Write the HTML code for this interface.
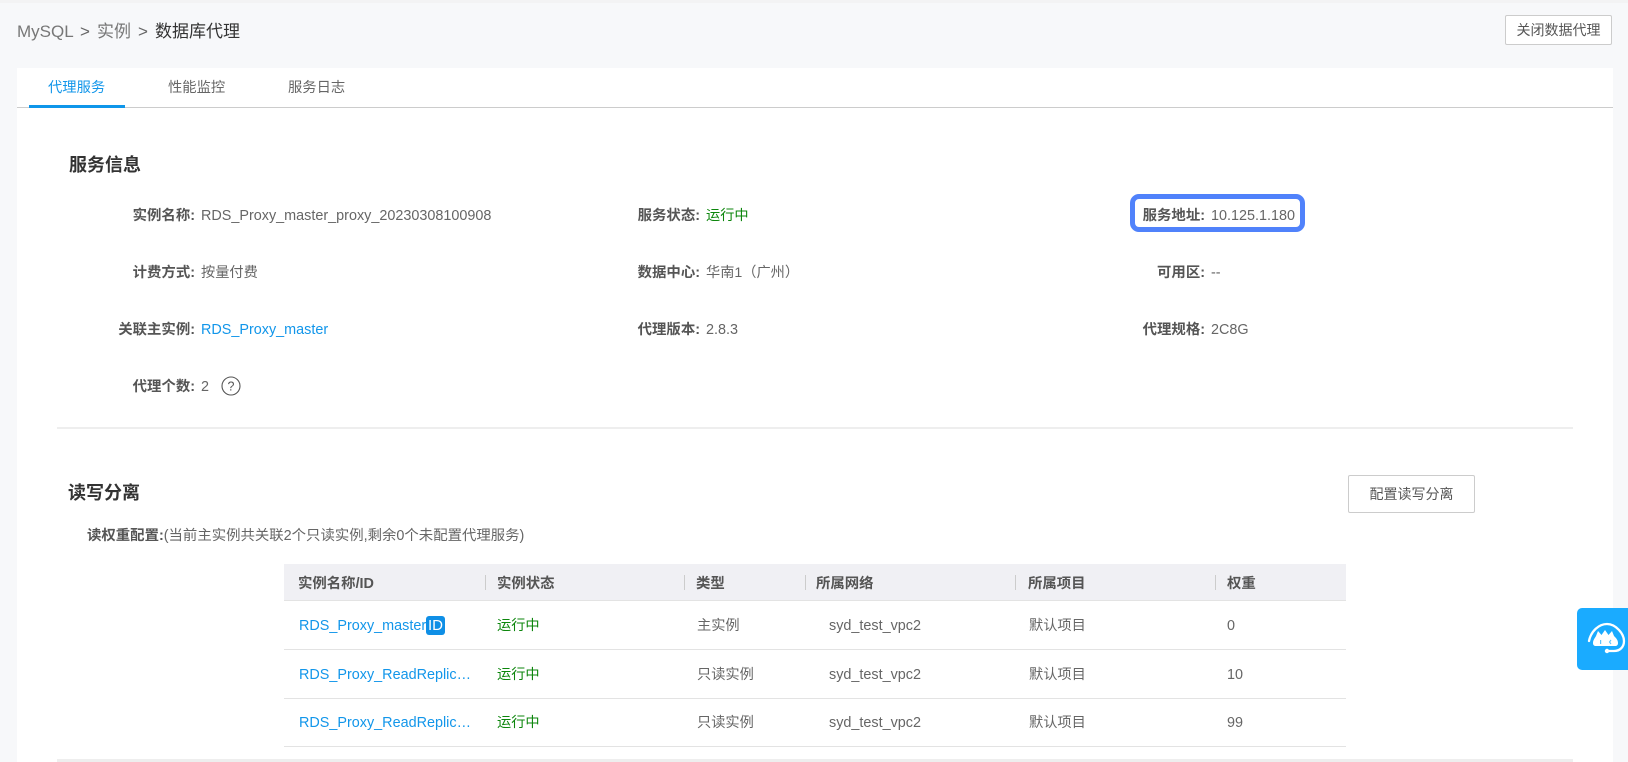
<!DOCTYPE html>
<html lang="zh">
<head>
<meta charset="utf-8">
<title>数据库代理</title>
<style>
html,body{margin:0;padding:0;width:1628px;height:762px;overflow:hidden;background:#f7f8fa;}
body{position:relative;font-family:"Liberation Sans","Noto Sans CJK SC",sans-serif;font-size:14.4px;color:#666;}
.a{position:absolute;white-space:nowrap;line-height:22px;}
.lab{font-weight:bold;color:#555;text-align:right;}
.val{color:#666;}
.blue{color:#1296ea;}
.green{color:#0c860c;font-size:14.2px;}
.h2{font-size:18px;font-weight:bold;color:#333;line-height:24px;}
.th{font-weight:bold;color:#555;}
.cj{font-size:14.2px;}
.sep{position:absolute;top:575px;width:1px;height:15px;background:#ccc;}
.line{position:absolute;left:284px;width:1062px;height:1px;background:#e3e3e3;}
</style>
</head>
<body>
<div style="position:absolute;left:0;top:0;width:1628px;height:3px;background:#f3f3f4;"></div>

<div class="a" style="left:17px;top:21px;font-size:17px;line-height:22px;color:#777;">MySQL</div>
<div class="a" style="left:80px;top:21px;font-size:17px;line-height:22px;color:#666;">&gt;</div>
<div class="a" style="left:97px;top:21px;font-size:17px;line-height:22px;color:#777;">实例</div>
<div class="a" style="left:138px;top:21px;font-size:17px;line-height:22px;color:#666;">&gt;</div>
<div class="a" style="left:155px;top:21px;font-size:17px;line-height:22px;color:#333;">数据库代理</div>

<div style="position:absolute;left:1505px;top:15px;width:105px;height:28px;border:1px solid #ccc;border-radius:2px;background:#fff;text-align:center;line-height:29px;color:#555;font-size:14px;">关闭数据代理</div>

<div style="position:absolute;left:17px;top:68px;width:1596px;height:694px;background:#fff;"></div>
<div style="position:absolute;left:17px;top:107px;width:1596px;height:1px;background:#ccc;"></div>
<div style="position:absolute;left:29px;top:105px;width:96px;height:3px;background:#0f96ea;"></div>
<div class="a blue" style="left:48px;top:77px;font-size:14.3px;">代理服务</div>
<div class="a" style="left:168px;top:77px;font-size:14.3px;">性能监控</div>
<div class="a" style="left:288px;top:77px;font-size:14.3px;">服务日志</div>

<div class="a h2" style="left:69px;top:153px;">服务信息</div>

<div class="a lab" style="left:94px;width:101px;top:205px;">实例名称:</div>
<div class="a val" style="left:201px;top:205px;">RDS_Proxy_master_proxy_20230308100908</div>
<div class="a lab" style="left:94px;width:101px;top:262px;">计费方式:</div>
<div class="a val cj" style="left:201px;top:262px;">按量付费</div>
<div class="a lab" style="left:94px;width:101px;top:319px;">关联主实例:</div>
<div class="a blue" style="left:201px;top:319px;">RDS_Proxy_master</div>
<div class="a lab" style="left:94px;width:101px;top:376px;">代理个数:</div>
<div class="a val" style="left:201px;top:376px;">2</div>
<svg style="position:absolute;left:220px;top:375px;" width="22" height="22" viewBox="0 0 22 22">
<circle cx="11" cy="11" r="9" fill="none" stroke="#555" stroke-width="1.1"/>
<text x="11" y="15.5" text-anchor="middle" font-size="12.5" fill="#555" font-family="Liberation Sans">?</text>
</svg>

<div class="a lab" style="left:600px;width:100px;top:205px;">服务状态:</div>
<div class="a green" style="left:706px;top:205px;">运行中</div>
<div class="a lab" style="left:600px;width:100px;top:262px;">数据中心:</div>
<div class="a val cj" style="left:706px;top:262px;">华南1（广州）</div>
<div class="a lab" style="left:600px;width:100px;top:319px;">代理版本:</div>
<div class="a val" style="left:706px;top:319px;">2.8.3</div>

<div style="position:absolute;left:1130px;top:194px;width:165px;height:28px;border:5px solid #5082fb;border-radius:9px;"></div>
<div class="a lab" style="left:1100px;width:105px;top:205px;">服务地址:</div>
<div class="a val" style="left:1211px;top:205px;">10.125.1.180</div>
<div class="a lab" style="left:1100px;width:105px;top:262px;">可用区:</div>
<div class="a val" style="left:1211px;top:262px;">--</div>
<div class="a lab" style="left:1100px;width:105px;top:319px;">代理规格:</div>
<div class="a val" style="left:1211px;top:319px;">2C8G</div>

<div style="position:absolute;left:57px;top:427px;width:1516px;height:2px;background:#eee;"></div>

<div class="a h2" style="left:68px;top:481px;">读写分离</div>
<div style="position:absolute;left:1348px;top:475px;width:125px;height:36px;border:1px solid #ccc;border-radius:2px;text-align:center;line-height:36px;color:#555;font-size:14px;">配置读写分离</div>

<div class="a" style="left:87px;top:525px;"><span style="font-weight:bold;color:#555;">读权重配置:</span>(当前主实例共关联2个只读实例,剩余0个未配置代理服务)</div>

<div style="position:absolute;left:284px;top:564px;width:1062px;height:37px;background:#f0f0f4;border-bottom:1px solid #e3e3e3;box-sizing:border-box;"></div>
<div class="a th" style="left:298px;top:573px;">实例名称/ID</div>
<div class="sep" style="left:485px;"></div>
<div class="a th" style="left:497px;top:573px;">实例状态</div>
<div class="sep" style="left:684px;"></div>
<div class="a th" style="left:696px;top:573px;">类型</div>
<div class="sep" style="left:805px;"></div>
<div class="a th" style="left:816px;top:573px;">所属网络</div>
<div class="sep" style="left:1015px;"></div>
<div class="a th" style="left:1028px;top:573px;">所属项目</div>
<div class="sep" style="left:1215px;"></div>
<div class="a th" style="left:1227px;top:573px;">权重</div>

<div class="a blue" style="left:299px;top:615px;">RDS_Proxy_master</div>
<div class="a" style="left:426px;top:616px;width:19px;height:19px;line-height:19px;background:#0f8fe6;border-radius:3px;color:#fff;text-align:center;font-size:15px;">ID</div>
<div class="a green" style="left:497px;top:615px;">运行中</div>
<div class="a cj" style="left:697px;top:615px;">主实例</div>
<div class="a val" style="left:829px;top:615px;">syd_test_vpc2</div>
<div class="a cj" style="left:1029px;top:615px;">默认项目</div>
<div class="a val" style="left:1227px;top:615px;">0</div>
<div class="line" style="top:649px;"></div>

<div class="a blue" style="left:299px;top:664px;">RDS_Proxy_ReadReplic…</div>
<div class="a green" style="left:497px;top:664px;">运行中</div>
<div class="a cj" style="left:697px;top:664px;">只读实例</div>
<div class="a val" style="left:829px;top:664px;">syd_test_vpc2</div>
<div class="a cj" style="left:1029px;top:664px;">默认项目</div>
<div class="a val" style="left:1227px;top:664px;">10</div>
<div class="line" style="top:698px;"></div>

<div class="a blue" style="left:299px;top:712px;">RDS_Proxy_ReadReplic…</div>
<div class="a green" style="left:497px;top:712px;">运行中</div>
<div class="a cj" style="left:697px;top:712px;">只读实例</div>
<div class="a val" style="left:829px;top:712px;">syd_test_vpc2</div>
<div class="a cj" style="left:1029px;top:712px;">默认项目</div>
<div class="a val" style="left:1227px;top:712px;">99</div>
<div class="line" style="top:746px;"></div>

<div style="position:absolute;left:57px;top:759px;width:1516px;height:3px;background:#eee;"></div>

<div style="position:absolute;left:1577px;top:608px;width:51px;height:62px;background:#1aabff;border-radius:5px 0 0 5px;"></div>
<svg style="position:absolute;left:1577px;top:608px;" width="51" height="62" viewBox="0 0 51 62">
<path d="M12 33C14 23 22 16 30 16C39 16 47 26 47 33C47 39 43 43 37 43H31" fill="none" stroke="#fff" stroke-width="2.3" stroke-linecap="round"/>
<circle cx="30" cy="43" r="2.2" fill="#fff"/>
<path d="M16 35C16 32 18 30 19 28L21 23L24.5 27L28 22L31.5 27L35 23L37 28C39 30 41 32 41 35C41 37 40 38 38 38H19C17 38 16 37 16 35Z" fill="#fff"/>
<rect x="23" y="32" width="1.2" height="4" fill="#1aabff" opacity=".7"/>
<path d="M34 32L32.5 34L34 36" fill="none" stroke="#1aabff" stroke-width="1.1" opacity=".7"/>
</svg>
</body>
</html>
